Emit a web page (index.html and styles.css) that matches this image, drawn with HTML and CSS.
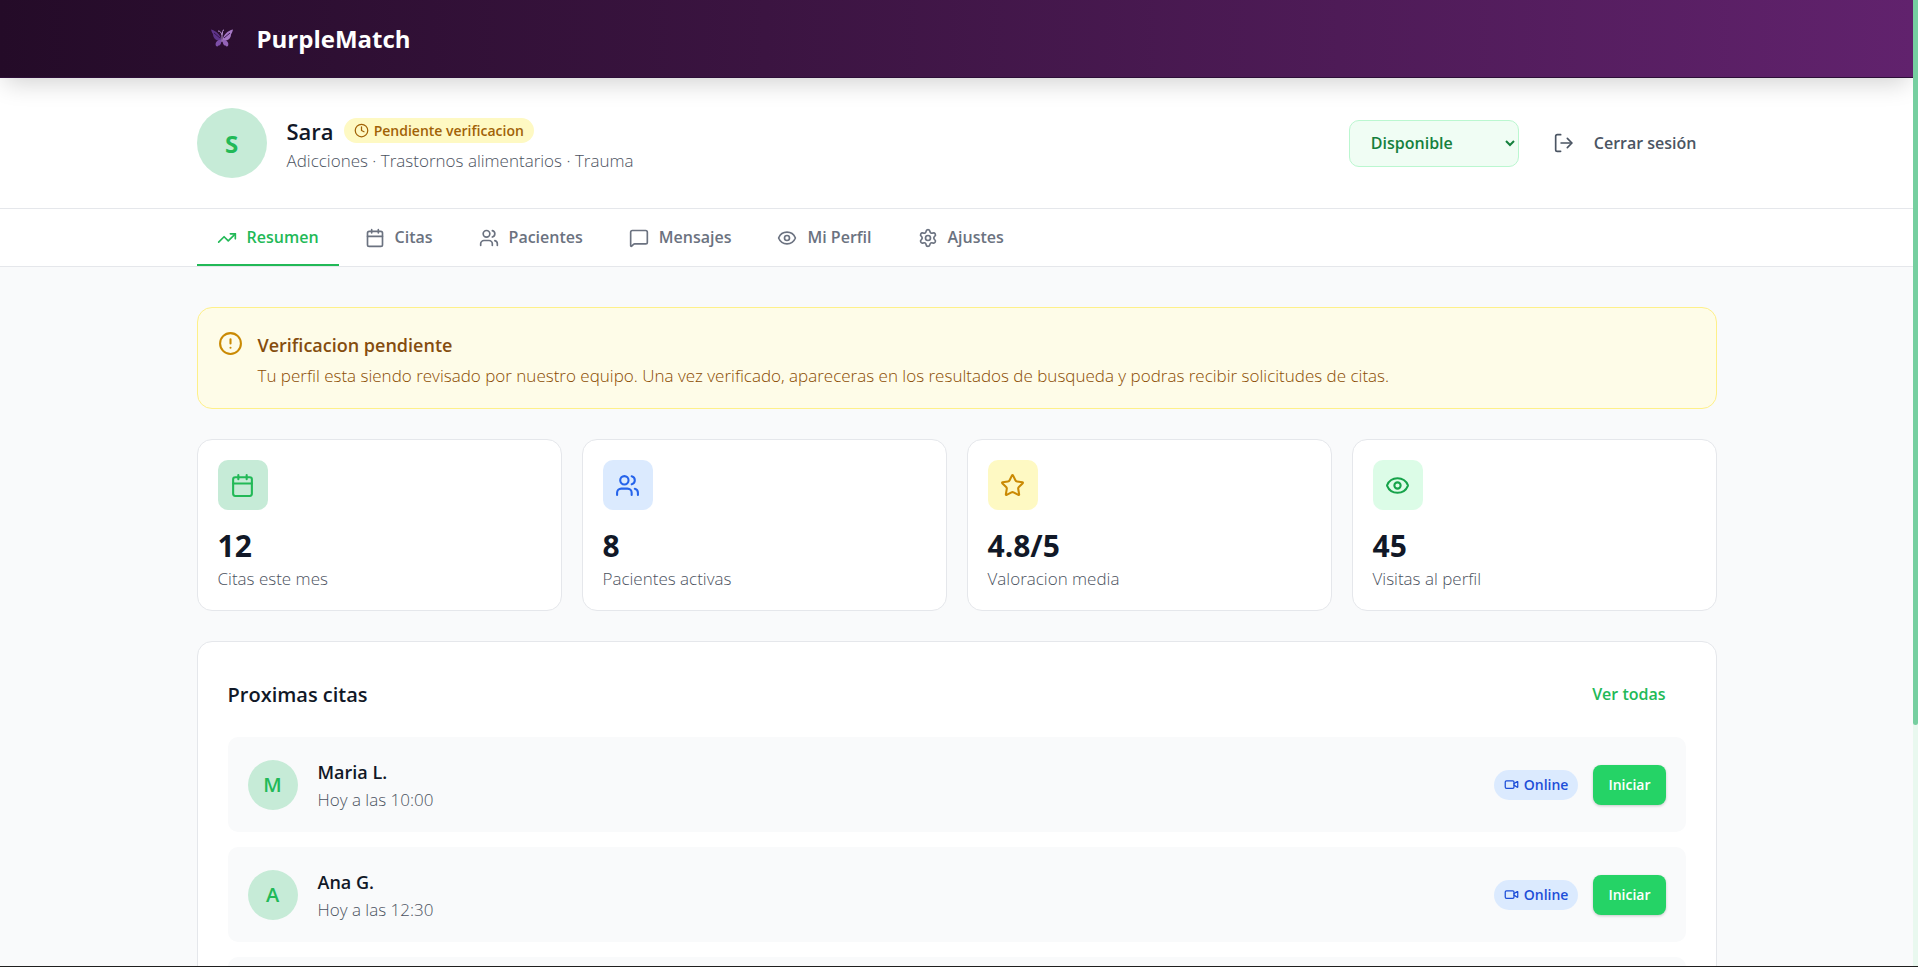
FILE: index.html
```html
<!DOCTYPE html>
<html lang="es">
<head>
    <meta charset="UTF-8">
    <meta name="viewport" content="width=device-width, initial-scale=1.0">
    <title>PurpleMatch - Panel</title>
    <link rel="stylesheet" href="styles.css">
</head>
<body>
    <svg class="sprite" aria-hidden="true">
        <symbol id="i-clock" viewBox="0 0 24 24"><circle cx="12" cy="12" r="10"/><path d="M12 6v6l4 2"/></symbol>
        <symbol id="i-logout" viewBox="0 0 24 24"><path d="M8 2H4a2 2 0 0 0-2 2v16a2 2 0 0 0 2 2h4"/><path d="M8.500 12H21"/><path d="M16 6.500l5.500 5.500-5.500 5.500"/></symbol>
        <symbol id="i-trend" viewBox="0 0 24 24"><path d="M22 7l-8.500 8.500-5-5L2 17"/><path d="M16 7h6v6"/></symbol>
        <symbol id="i-calendar" viewBox="0 0 24 24"><path d="M8 2v4M16 2v4M3 10h18"/><rect x="3" y="4" width="18" height="18" rx="2"/></symbol>
        <symbol id="i-users" viewBox="0 0 24 24"><path d="M16 21v-2a4 4 0 0 0-4-4H6a4 4 0 0 0-4 4v2"/><circle cx="9" cy="7" r="4"/><path d="M22 21v-2a4 4 0 0 0-3-3.870"/><path d="M16 3.130a4 4 0 0 1 0 7.750"/></symbol>
        <symbol id="i-message" viewBox="0 0 24 24"><path d="M22 17a2 2 0 0 1-2 2H6.800a2 2 0 0 0-1.400.600l-2.200 2.200A.7.7 0 0 1 2 21.300V5a2 2 0 0 1 2-2h16a2 2 0 0 1 2 2z"/></symbol>
        <symbol id="i-eye" viewBox="0 0 24 24"><path d="M2.060 12.350a1 1 0 0 1 0-.7 10.750 10.750 0 0 1 19.880 0 1 1 0 0 1 0 .7 10.750 10.750 0 0 1-19.880 0"/><circle cx="12" cy="12" r="3"/></symbol>
        <symbol id="i-settings" viewBox="0 0 24 24"><path d="M9.670 4.140a2.340 2.340 0 0 1 4.660 0 2.340 2.340 0 0 0 3.320 1.910 2.340 2.340 0 0 1 2.330 4.030 2.340 2.340 0 0 0 0 3.830 2.340 2.340 0 0 1-2.330 4.030 2.340 2.340 0 0 0-3.320 1.920 2.340 2.340 0 0 1-4.660 0 2.340 2.340 0 0 0-3.320-1.920 2.340 2.340 0 0 1-2.330-4.030 2.340 2.340 0 0 0 0-3.830A2.340 2.340 0 0 1 6.350 6.050a2.340 2.340 0 0 0 3.320-1.910"/><circle cx="12" cy="12" r="3"/></symbol>
        <symbol id="i-alert" viewBox="0 0 24 24"><circle cx="12" cy="12" r="10"/><path d="M12 8v4M12 16h.01"/></symbol>
        <symbol id="i-star" viewBox="0 0 24 24"><path d="M11.530 2.300a.53.53 0 0 1 .95 0l2.310 4.680a2.120 2.120 0 0 0 1.600 1.160l5.160.76a.53.53 0 0 1 .3.900l-3.740 3.640a2.120 2.120 0 0 0-.61 1.880l.88 5.140a.53.53 0 0 1-.77.56l-4.620-2.430a2.120 2.120 0 0 0-1.970 0L6.400 21.010a.53.53 0 0 1-.77-.56l.88-5.140a2.120 2.120 0 0 0-.61-1.880L2.160 9.800a.53.53 0 0 1 .3-.9l5.160-.76a2.120 2.120 0 0 0 1.600-1.160z"/></symbol>
        <symbol id="i-video" viewBox="0 0 24 24"><path d="M16 13l5.220 3.480a.5.5 0 0 0 .78-.41V7.870a.5.5 0 0 0-.75-.43L16 10.500"/><rect x="2" y="6" width="14" height="12" rx="2"/></symbol>
    </svg>

    <header class="topbar">
        <div class="container brand">
            <svg class="brand-logo" viewBox="0 0 50 50" aria-hidden="true">
                <path fill="#5d3489" d="M24.500 27C24 21 19 16.500 14 15.500c.5 2 1 3 2 4.500 0 3 2 6 5 6.500z"/>
                <path fill="#a678c6" d="M25.500 27c.5-6 5-10.500 10.500-11.500-.5 2-1 3.500-2 5 0 3-2 5.500-5 6z"/>
                <path fill="#7d4fa8" d="M24.500 25.500c-4 0-7 3-5.500 6.500 1 .8 2 .5 2.500-.5 2 .2 3-2.500 3-6z"/>
                <path fill="#9463b8" d="M25.500 25.500c4 0 7 3 5.500 6.500-1 .8-2 .5-2.500-.5-2 .2-3-2.500-3-6z"/>
                <path fill="none" stroke="#b894d4" d="M25 28v-7M25 21c-1-3-2-4-4-4M25 21c1-3 0-5 2-5"/>
                <path fill="none" stroke="#3a1650" d="M17 19l6 5M33 19l-6 5"/>
            </svg>
            <span class="brand-name">PurpleMatch</span>
        </div>
    </header>

    <section class="profile">
        <div class="container profile-row">
            <div class="avatar avatar-lg">S</div>
            <div class="profile-info">
                <div class="profile-title">
                    <h1>Sara</h1>
                    <span class="badge badge-pending"><svg class="icon"><use href="#i-clock"/></svg>Pendiente verificacion</span>
                </div>
                <p class="muted">Adicciones · Trastornos alimentarios · Trauma</p>
            </div>
            <div class="profile-actions">
                <select class="status" aria-label="Estado">
                    <option>Disponible</option>
                    <option>Ocupada</option>
                    <option>No disponible</option>
                </select>
                <button class="logout"><svg class="icon"><use href="#i-logout"/></svg>Cerrar sesión</button>
            </div>
        </div>
    </section>

    <nav class="tabs">
        <div class="container tabs-row">
            <button class="tab active"><svg class="icon"><use href="#i-trend"/></svg>Resumen</button>
            <button class="tab"><svg class="icon"><use href="#i-calendar"/></svg>Citas</button>
            <button class="tab"><svg class="icon"><use href="#i-users"/></svg>Pacientes</button>
            <button class="tab"><svg class="icon"><use href="#i-message"/></svg>Mensajes</button>
            <button class="tab"><svg class="icon"><use href="#i-eye"/></svg>Mi Perfil</button>
            <button class="tab"><svg class="icon"><use href="#i-settings"/></svg>Ajustes</button>
        </div>
    </nav>

    <main class="container content">
        <div class="notice">
            <svg class="icon"><use href="#i-alert"/></svg>
            <div>
                <h2>Verificacion pendiente</h2>
                <p>Tu perfil esta siendo revisado por nuestro equipo. Una vez verificado, apareceras en los resultados de busqueda y podras recibir solicitudes de citas.</p>
            </div>
        </div>

        <div class="stats">
            <div class="stat">
                <div class="stat-icon green"><svg class="icon"><use href="#i-calendar"/></svg></div>
                <p class="stat-value">12</p>
                <p class="muted">Citas este mes</p>
            </div>
            <div class="stat">
                <div class="stat-icon blue"><svg class="icon"><use href="#i-users"/></svg></div>
                <p class="stat-value">8</p>
                <p class="muted">Pacientes activas</p>
            </div>
            <div class="stat">
                <div class="stat-icon yellow"><svg class="icon"><use href="#i-star"/></svg></div>
                <p class="stat-value">4.8/5</p>
                <p class="muted">Valoracion media</p>
            </div>
            <div class="stat">
                <div class="stat-icon mint"><svg class="icon"><use href="#i-eye"/></svg></div>
                <p class="stat-value">45</p>
                <p class="muted">Visitas al perfil</p>
            </div>
        </div>

        <section class="panel">
            <div class="panel-head">
                <h2>Proximas citas</h2>
                <button class="link-btn">Ver todas</button>
            </div>
            <div class="cita">
                <div class="avatar">M</div>
                <div class="cita-info">
                    <h3>Maria L.</h3>
                    <p class="muted">Hoy a las 10:00</p>
                </div>
                <span class="badge badge-online"><svg class="icon"><use href="#i-video"/></svg>Online</span>
                <button class="start-btn">Iniciar</button>
            </div>
            <div class="cita">
                <div class="avatar">A</div>
                <div class="cita-info">
                    <h3>Ana G.</h3>
                    <p class="muted">Hoy a las 12:30</p>
                </div>
                <span class="badge badge-online"><svg class="icon"><use href="#i-video"/></svg>Online</span>
                <button class="start-btn">Iniciar</button>
            </div>
            <div class="cita"></div>
        </section>
    </main>

    <div class="scroll-track"><div class="scroll-thumb"></div></div>
</body>
</html>
```
FILE: styles.css
```css
* {
    box-sizing: border-box;
    margin: 0;
    padding: 0;
}
body {
    font-family: "Segoe UI", "Open Sans", "Noto Sans", sans-serif;
    font-size: 17px;
    line-height: 27px;
    color: #111827;
    background: #f9fafb;
    height: 100vh;
    overflow: hidden;
    padding-right: 5px;
    border-bottom: 1px solid #1f1f1f;
}
button, select {
    font: inherit;
    font-size: 16px;
    font-weight: 600;
    cursor: pointer;
    border: none;
    background: none;
}
.sprite {
    display: none;
}
.icon {
    width: 20px;
    height: 20px;
    flex-shrink: 0;
    fill: none;
    stroke: currentColor;
    stroke-width: 2;
    stroke-linecap: round;
    stroke-linejoin: round;
}
.container {
    max-width: 1600px;
    margin: 0 auto;
    padding: 0 40px;
}
.muted {
    color: #4b5260;
    font-weight: 300;
}

/* Cabecera */
.topbar {
    position: relative;
    background: linear-gradient(90deg, #240b28 0%, #3b1441 40%, #61226d 100%);
    border-bottom: 1px solid #2d0f38;
    box-shadow: 0 10px 25px -5px rgba(0, 0, 0, 0.18);
}
.brand {
    display: flex;
    align-items: center;
    gap: 10px;
    height: 77px;
}
.brand-logo {
    width: 50px;
    height: 50px;
}
.brand-name {
    color: #fff;
    font-size: 24px;
    font-weight: 700;
}

/* Perfil */
.profile {
    background: #fff;
    border-bottom: 1px solid #e5e7eb;
}
.profile-row {
    display: flex;
    align-items: center;
    gap: 20px;
    padding-top: 30px;
    padding-bottom: 30px;
}
.avatar {
    display: flex;
    align-items: center;
    justify-content: center;
    width: 50px;
    height: 50px;
    border-radius: 50%;
    background: #c6ebd7;
    color: #22b957;
    font-size: 20px;
    font-weight: 600;
}
.avatar-lg {
    width: 70px;
    height: 70px;
    font-size: 24px;
    font-weight: 700;
}
.profile-info {
    flex: 1;
    padding-top: 2px;
}
.profile-title {
    display: flex;
    align-items: center;
    gap: 10px;
}
.profile-title h1 {
    font-size: 22px;
    line-height: 32px;
    font-weight: 600;
}
.badge {
    display: inline-flex;
    align-items: center;
    gap: 5px;
    border-radius: 15px;
    padding: 0 10px;
    font-size: 14px;
    line-height: 25px;
    font-weight: 600;
}
.badge .icon {
    width: 15px;
    height: 15px;
}
.badge-pending {
    background: #fef9c3;
    color: #a16207;
}
.badge-online {
    background: #dbeafe;
    color: #1d4ed8;
    line-height: 30px;
}
.profile-actions {
    display: flex;
    align-items: center;
    gap: 15px;
}
.status {
    width: 170px;
    height: 47px;
    padding: 0 0 0 17px;
    border: 1px solid #bbf7d0;
    border-radius: 10px;
    background: #f0fdf4;
    color: #15803d;
}
.logout {
    display: flex;
    align-items: center;
    gap: 20px;
    padding: 10px 20px;
    color: #4b5563;
}

/* Pestañas */
.tabs {
    background: #fff;
    border-bottom: 1px solid #e5e7eb;
}
.tabs-row {
    display: flex;
    gap: 6px;
}
.tab {
    display: flex;
    align-items: center;
    gap: 10px;
    padding: 15px 20px 13px;
    border-bottom: 2px solid transparent;
    color: #6b7280;
}
.tab.active {
    color: #22b957;
    border-bottom-color: #22b957;
}

/* Contenido */
.content {
    display: flex;
    flex-direction: column;
    gap: 30px;
    padding-top: 40px;
}
.notice {
    display: flex;
    gap: 15px;
    padding: 20px 20px 19px;
    background: #fefce8;
    border: 1px solid #fef08a;
    border-radius: 15px;
    color: #8a4b00;
    font-weight: 300;
}
.notice .icon {
    width: 25px;
    height: 25px;
    margin-top: 3px;
    color: #ca8a04;
}
.notice h2 {
    font-size: 18px;
    line-height: 34px;
    font-weight: 600;
    color: #854d0e;
}
.stats {
    display: grid;
    grid-template-columns: repeat(4, 1fr);
    gap: 20px;
}
.stat {
    padding: 20px 20px 18px;
    background: #fff;
    border: 1px solid #e5e7eb;
    border-radius: 15px;
}
.stat-icon {
    display: flex;
    align-items: center;
    justify-content: center;
    width: 50px;
    height: 50px;
    margin-bottom: 17px;
    border-radius: 10px;
}
.stat-icon .icon {
    width: 25px;
    height: 25px;
}
.green {
    background: #c6ebd7;
    color: #22b957;
}
.blue {
    background: #dbeafe;
    color: #2563eb;
}
.yellow {
    background: #fef9c3;
    color: #ca8a04;
}
.mint {
    background: #dcfce7;
    color: #16a34a;
}
.stat-value {
    font-size: 30px;
    line-height: 38px;
    font-weight: 700;
}
.panel {
    padding: 30px;
    background: #fff;
    border: 1px solid #e5e7eb;
    border-radius: 15px;
}
.panel-head {
    display: flex;
    align-items: center;
    justify-content: space-between;
    margin-bottom: 20px;
}
.panel-head h2 {
    font-size: 20px;
    font-weight: 600;
}
.link-btn {
    padding: 9px 20px;
    color: #22b957;
}
.cita {
    display: flex;
    align-items: center;
    gap: 15px;
    min-height: 95px;
    margin-bottom: 15px;
    padding: 19px 20px;
    background: #f9fafb;
    border-radius: 10px;
}
.cita-info {
    flex: 1;
    padding: 2px 0 0 5px;
}
.cita-info h3 {
    font-size: 18px;
    line-height: 28px;
    font-weight: 600;
}
.start-btn {
    height: 40px;
    padding: 0 15px;
    border-radius: 8px;
    background: #25d366;
    color: #fff;
    font-size: 14px;
    box-shadow: 0 1px 3px rgba(0, 0, 0, 0.2);
}

/* Barra de desplazamiento */
.scroll-track {
    position: fixed;
    top: 0;
    right: 0;
    bottom: 1px;
    width: 5px;
    background: #e9f8ef;
}
.scroll-thumb {
    height: 75%;
    border-radius: 0 0 5px 5px;
    background: #76cfa0;
}
```
